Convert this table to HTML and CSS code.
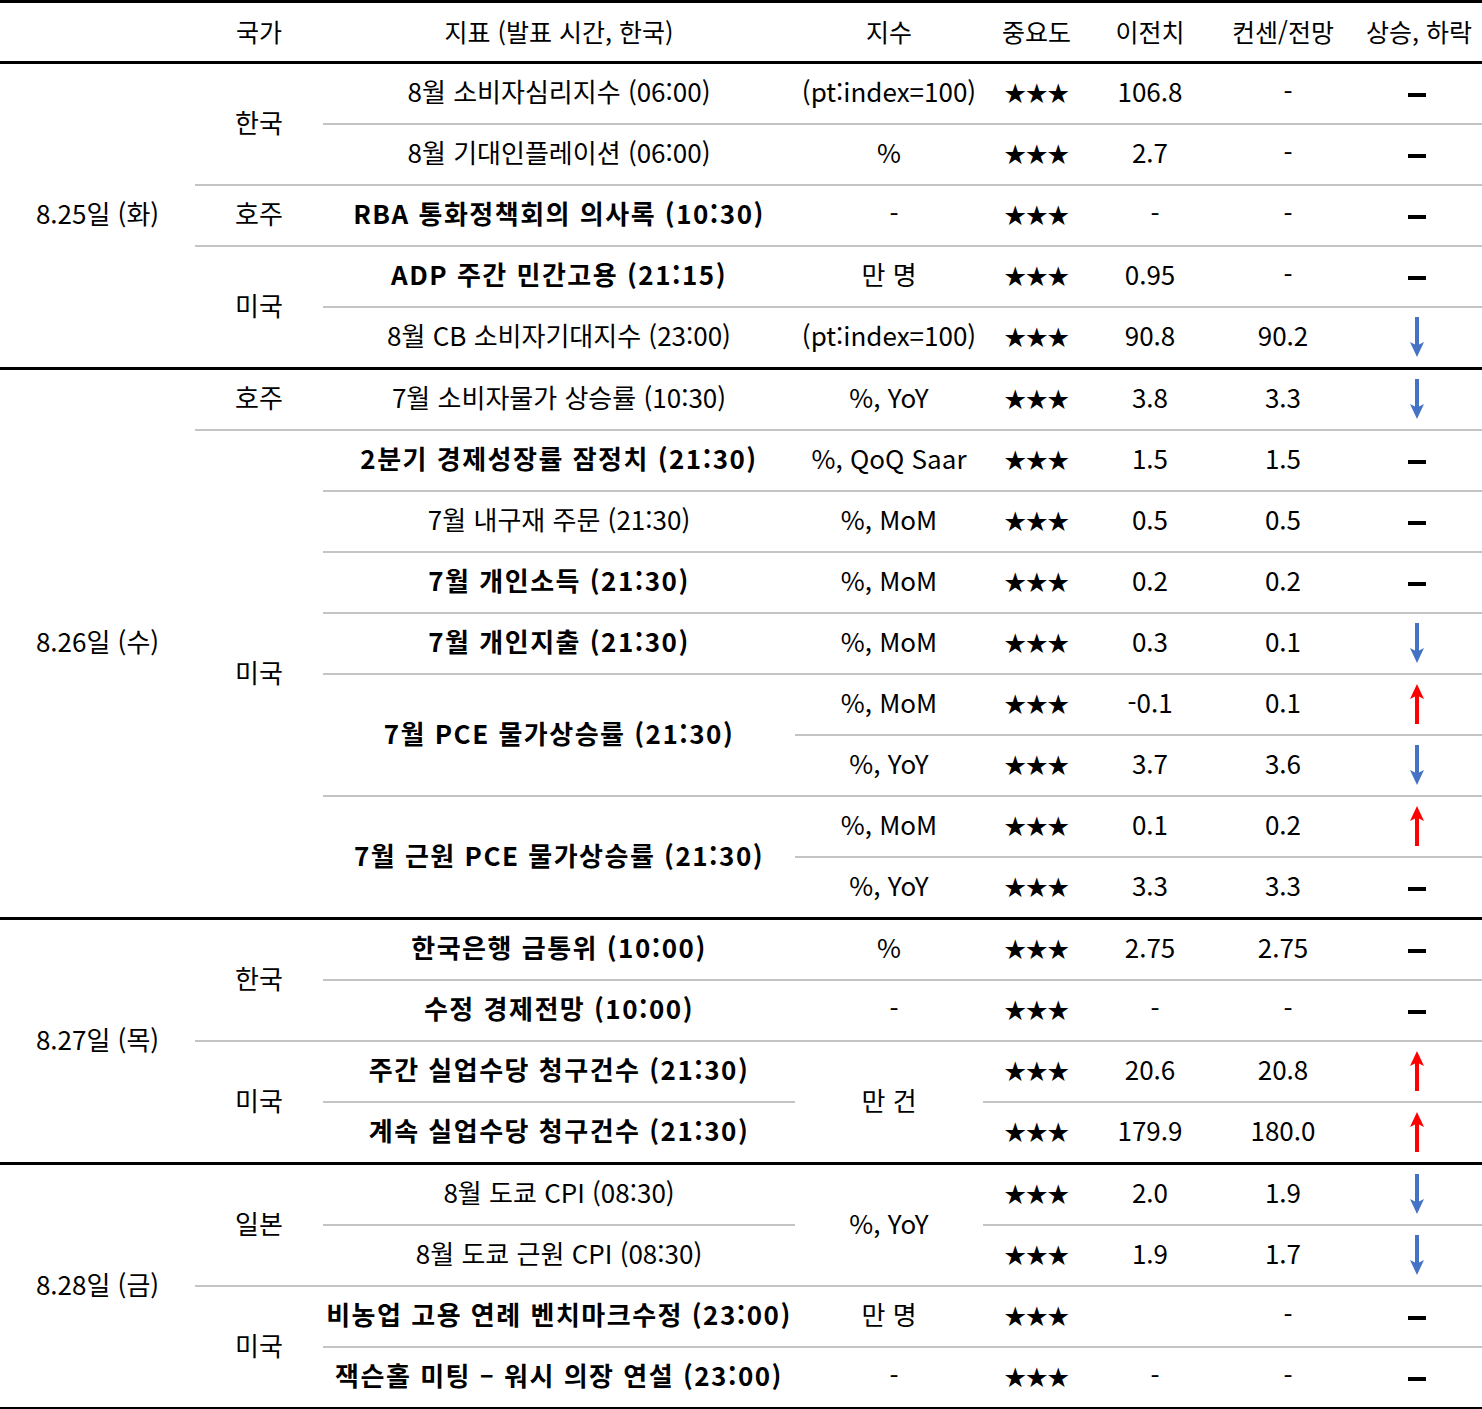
FILE: index.html
```html
<!DOCTYPE html>
<html lang="ko">
<head>
<meta charset="utf-8">
<title>주요 경제지표 일정</title>
<link rel="stylesheet" href="styles.css">
</head>
<body>
<table class="cal">
  <colgroup>
    <col class="c-date"><col class="c-cty"><col class="c-ind"><col class="c-unit"><col class="c-imp"><col class="c-prev"><col class="c-cons"><col class="c-dir">
  </colgroup>
  <thead>
    <tr><th></th><th>국가</th><th>지표 (발표 시간, 한국)</th><th>지수</th><th>중요도</th><th>이전치</th><th>컨센/전망</th><th>상승, 하락</th></tr>
  </thead>
  <tbody>
    <tr><td rowspan="5">8.25일 (화)</td><td rowspan="2">한국</td><td>8월 소비자심리지수 (06:00)</td><td>(pt:index=100)</td><td class="st">★★★</td><td>106.8</td><td><span class="sd">-</span></td><td class="dir"><span class="bar"></span></td></tr>
    <tr><td>8월 기대인플레이션 (06:00)</td><td>%</td><td class="st">★★★</td><td>2.7</td><td><span class="sd">-</span></td><td class="dir"><span class="bar"></span></td></tr>
    <tr><td>호주</td><td class="b">RBA 통화정책회의 의사록 (10:30)</td><td><span class="sd">-</span></td><td class="st">★★★</td><td><span class="sd">-</span></td><td><span class="sd">-</span></td><td class="dir"><span class="bar"></span></td></tr>
    <tr><td rowspan="2">미국</td><td class="b">ADP 주간 민간고용 (21:15)</td><td>만 명</td><td class="st">★★★</td><td>0.95</td><td><span class="sd">-</span></td><td class="dir"><span class="bar"></span></td></tr>
    <tr><td>8월 CB 소비자기대지수 (23:00)</td><td>(pt:index=100)</td><td class="st">★★★</td><td>90.8</td><td>90.2</td><td class="dir"><svg class="arr" viewBox="0 0 16 40"><path d="M8 0V30" stroke="#4472c4" stroke-width="4"/><path d="M1 25L8 40L15 25L8 28.5Z" fill="#4472c4"/></svg></td></tr>
  </tbody>
  <tbody>
    <tr><td rowspan="9">8.26일 (수)</td><td>호주</td><td>7월 소비자물가 상승률 (10:30)</td><td>%, YoY</td><td class="st">★★★</td><td>3.8</td><td>3.3</td><td class="dir"><svg class="arr" viewBox="0 0 16 40"><path d="M8 0V30" stroke="#4472c4" stroke-width="4"/><path d="M1 25L8 40L15 25L8 28.5Z" fill="#4472c4"/></svg></td></tr>
    <tr><td rowspan="8">미국</td><td class="b">2분기 경제성장률 잠정치 (21:30)</td><td>%, QoQ Saar</td><td class="st">★★★</td><td>1.5</td><td>1.5</td><td class="dir"><span class="bar"></span></td></tr>
    <tr><td>7월 내구재 주문 (21:30)</td><td>%, MoM</td><td class="st">★★★</td><td>0.5</td><td>0.5</td><td class="dir"><span class="bar"></span></td></tr>
    <tr><td class="b">7월 개인소득 (21:30)</td><td>%, MoM</td><td class="st">★★★</td><td>0.2</td><td>0.2</td><td class="dir"><span class="bar"></span></td></tr>
    <tr><td class="b">7월 개인지출 (21:30)</td><td>%, MoM</td><td class="st">★★★</td><td>0.3</td><td>0.1</td><td class="dir"><svg class="arr" viewBox="0 0 16 40"><path d="M8 0V30" stroke="#4472c4" stroke-width="4"/><path d="M1 25L8 40L15 25L8 28.5Z" fill="#4472c4"/></svg></td></tr>
    <tr><td rowspan="2" class="b">7월 PCE 물가상승률 (21:30)</td><td>%, MoM</td><td class="st">★★★</td><td>-0.1</td><td>0.1</td><td class="dir"><svg class="arr" viewBox="0 0 16 40"><path d="M8 40V10" stroke="#ff0000" stroke-width="4"/><path d="M1 15L8 0L15 15L8 11.5Z" fill="#ff0000"/></svg></td></tr>
    <tr><td>%, YoY</td><td class="st">★★★</td><td>3.7</td><td>3.6</td><td class="dir"><svg class="arr" viewBox="0 0 16 40"><path d="M8 0V30" stroke="#4472c4" stroke-width="4"/><path d="M1 25L8 40L15 25L8 28.5Z" fill="#4472c4"/></svg></td></tr>
    <tr><td rowspan="2" class="b">7월 근원 PCE 물가상승률 (21:30)</td><td>%, MoM</td><td class="st">★★★</td><td>0.1</td><td>0.2</td><td class="dir"><svg class="arr" viewBox="0 0 16 40"><path d="M8 40V10" stroke="#ff0000" stroke-width="4"/><path d="M1 15L8 0L15 15L8 11.5Z" fill="#ff0000"/></svg></td></tr>
    <tr><td>%, YoY</td><td class="st">★★★</td><td>3.3</td><td>3.3</td><td class="dir"><span class="bar"></span></td></tr>
  </tbody>
  <tbody>
    <tr><td rowspan="4">8.27일 (목)</td><td rowspan="2">한국</td><td class="b">한국은행 금통위 (10:00)</td><td>%</td><td class="st">★★★</td><td>2.75</td><td>2.75</td><td class="dir"><span class="bar"></span></td></tr>
    <tr><td class="b">수정 경제전망 (10:00)</td><td><span class="sd">-</span></td><td class="st">★★★</td><td><span class="sd">-</span></td><td><span class="sd">-</span></td><td class="dir"><span class="bar"></span></td></tr>
    <tr><td rowspan="2">미국</td><td class="b">주간 실업수당 청구건수 (21:30)</td><td rowspan="2">만 건</td><td class="st">★★★</td><td>20.6</td><td>20.8</td><td class="dir"><svg class="arr" viewBox="0 0 16 40"><path d="M8 40V10" stroke="#ff0000" stroke-width="4"/><path d="M1 15L8 0L15 15L8 11.5Z" fill="#ff0000"/></svg></td></tr>
    <tr><td class="b">계속 실업수당 청구건수 (21:30)</td><td class="st">★★★</td><td>179.9</td><td>180.0</td><td class="dir"><svg class="arr" viewBox="0 0 16 40"><path d="M8 40V10" stroke="#ff0000" stroke-width="4"/><path d="M1 15L8 0L15 15L8 11.5Z" fill="#ff0000"/></svg></td></tr>
  </tbody>
  <tbody>
    <tr><td rowspan="4">8.28일 (금)</td><td rowspan="2">일본</td><td>8월 도쿄 CPI (08:30)</td><td rowspan="2">%, YoY</td><td class="st">★★★</td><td>2.0</td><td>1.9</td><td class="dir"><svg class="arr" viewBox="0 0 16 40"><path d="M8 0V30" stroke="#4472c4" stroke-width="4"/><path d="M1 25L8 40L15 25L8 28.5Z" fill="#4472c4"/></svg></td></tr>
    <tr><td>8월 도쿄 근원 CPI (08:30)</td><td class="st">★★★</td><td>1.9</td><td>1.7</td><td class="dir"><svg class="arr" viewBox="0 0 16 40"><path d="M8 0V30" stroke="#4472c4" stroke-width="4"/><path d="M1 25L8 40L15 25L8 28.5Z" fill="#4472c4"/></svg></td></tr>
    <tr><td rowspan="2">미국</td><td class="b">비농업 고용 연례 벤치마크수정 (23:00)</td><td>만 명</td><td class="st">★★★</td><td></td><td><span class="sd">-</span></td><td class="dir"><span class="bar"></span></td></tr>
    <tr><td class="b">잭슨홀 미팅 – 워시 의장 연설 (23:00)</td><td><span class="sd">-</span></td><td class="st">★★★</td><td><span class="sd">-</span></td><td><span class="sd">-</span></td><td class="dir"><span class="bar"></span></td></tr>
  </tbody>
</table>
</body>
</html>
```

FILE: styles.css
```css
html, body {
  margin: 0;
  padding: 0;
  background: #ffffff;
}
body {
  font-family: "Noto Sans CJK KR", "Noto Sans", sans-serif;
  color: #000000;
}
.cal {
  width: 1482px;
  border-collapse: collapse;
  table-layout: fixed;
}
.c-date { width: 195px; }
.c-cty { width: 128px; }
.c-ind { width: 472px; }
.c-unit { width: 188px; }
.c-imp { width: 107px; }
.c-prev { width: 120px; }
.c-cons { width: 146px; }
.c-dir { width: 126px; }

.cal th,
.cal td {
  padding: 0 0 5px;
  height: 54px;
  text-align: center;
  vertical-align: middle;
  font-size: 26px;
  font-weight: 400;
  line-height: 1;
  white-space: nowrap;
  border-bottom: 2px solid #c4c4c4;
}
.cal thead th {
  height: 56px;
  padding: 0 0 2px;
  font-size: 25px;
  border-top: 3px solid #000000;
  border-bottom: 3px solid #000000;
}
.cal tbody {
  border-bottom: 3px solid #000000;
}
.cal td.b {
  font-weight: 700;
  letter-spacing: 1.5px;
}
.cal td.st {
  font-size: 22px;
  letter-spacing: -0.5px;
}
.cal td.dir {
  padding-right: 4px;
}
.sd {
  display: inline-block;
  padding-left: 10px;
}
.bar {
  display: inline-block;
  width: 18px;
  height: 4px;
  background: #000000;
  vertical-align: middle;
}
.arr {
  display: block;
  width: 16px;
  height: 40px;
  margin: 4px auto 0;
}
```
